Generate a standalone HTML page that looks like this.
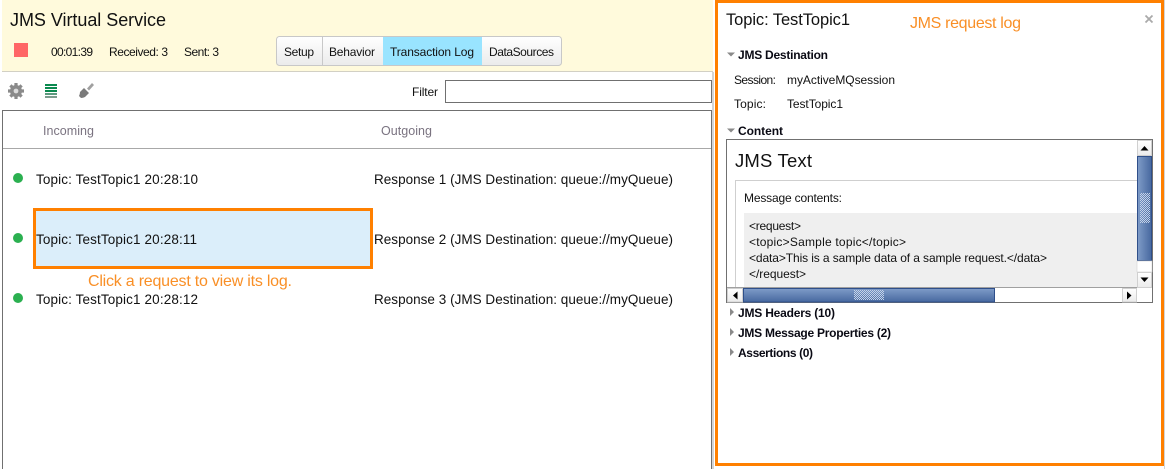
<!DOCTYPE html>
<html>
<head>
<meta charset="utf-8">
<style>
html,body{margin:0;padding:0;background:#fff;width:1165px;height:469px;overflow:hidden}
svg{display:block;position:absolute;left:0;top:0}
text{font-family:"Liberation Sans",sans-serif;font-size:12.5px;fill:#111}
.b{font-weight:bold;font-size:12px;fill:#0a0a14}
.o{fill:#f98f26;font-size:16px}
.h{fill:#7a7380;font-size:12.5px}
</style>
</head>
<body>
<svg width="1165" height="469" viewBox="0 0 1165 469" xmlns="http://www.w3.org/2000/svg">
<defs>
<linearGradient id="tab" x1="0" y1="0" x2="0" y2="1"><stop offset="0" stop-color="#ffffff"/><stop offset="1" stop-color="#ebebeb"/></linearGradient>
<linearGradient id="thV" x1="0" y1="0" x2="1" y2="0"><stop offset="0" stop-color="#7f9cc8"/><stop offset="1" stop-color="#47689f"/></linearGradient>
<linearGradient id="thH" x1="0" y1="0" x2="0" y2="1"><stop offset="0" stop-color="#7f9cc8"/><stop offset="1" stop-color="#47689f"/></linearGradient>
<pattern id="dots" width="2" height="2" patternUnits="userSpaceOnUse"><rect width="1" height="1" fill="#c4d2e8"/><rect x="1" y="1" width="1" height="1" fill="#c4d2e8"/></pattern>
</defs>

<!-- header -->
<rect x="2" y="0" width="711" height="71" fill="#fffadc"/>
<rect x="2" y="71" width="711" height="1" fill="#d2d0c4"/>
<text x="10" y="26" style="font-size:18px" textLength="156" fill="#000">JMS Virtual Service</text>
<rect x="14" y="43" width="14" height="14" fill="#ff6666"/>
<text x="51" y="56" style="font-size:12px" textLength="42">00:01:39</text>
<text x="109" y="56" style="font-size:12px" textLength="59">Received: 3</text>
<text x="184" y="56" style="font-size:12px" textLength="35">Sent: 3</text>

<!-- tabs -->
<rect x="276.5" y="36.5" width="285" height="29" rx="3" fill="url(#tab)" stroke="#c8c8c8"/>
<rect x="383" y="37" width="99" height="28" fill="#99e4ff"/>
<rect x="322" y="37" width="1" height="28" fill="#c8c8c8"/>
<text x="284" y="56" style="font-size:12px" textLength="30">Setup</text>
<text x="329" y="56" style="font-size:12px" textLength="46">Behavior</text>
<text x="390" y="56" style="font-size:12px" textLength="84">Transaction Log</text>
<text x="489" y="56" style="font-size:12px" textLength="65">DataSources</text>

<!-- toolbar icons -->
<circle cx="16" cy="91" r="6" fill="#8a8a8a"/>
<path d="M16 83v16M8 91h16M10.4 85.4l11.2 11.2M21.6 85.4l-11.2 11.2" stroke="#8a8a8a" stroke-width="3.2" fill="none"/>
<circle cx="16" cy="91" r="2.4" fill="#dcdcdc"/>
<rect x="45" y="84" width="12" height="2" fill="#0b8a4f"/>
<rect x="45" y="87" width="12" height="2" fill="#0b8a4f"/>
<rect x="45" y="90" width="12" height="2" fill="#0b8a4f"/>
<rect x="45" y="93" width="12" height="2" fill="#5c9a7e"/>
<rect x="45" y="96" width="12" height="2" fill="#7c9c8e"/>
<path d="M84 88L89 93L85 97Q83 98 81 98L79 96Q80 94 80 92z" fill="#7a7a7a"/>
<path d="M87 88.5L92 83L94 85L89 90.5z" fill="#a0a0a0"/>

<!-- filter -->
<text x="412" y="96" style="font-size:12px" textLength="26">Filter</text>
<rect x="445.5" y="80.5" width="266" height="22" fill="#fff" stroke="#707070"/>

<!-- table -->
<path d="M2.5 469V110.5H711.5V469" fill="none" stroke="#707070"/>
<rect x="3" y="148" width="708" height="1" fill="#a8a8a8"/>
<text x="43" y="135" class="h" textLength="51">Incoming</text>
<text x="381" y="135" class="h" textLength="51">Outgoing</text>
<rect x="712" y="72" width="2" height="397" fill="#d4d4d4"/>

<circle cx="18" cy="178" r="5" fill="#2bb050"/>
<text x="36" y="184" style="font-size:13.5px" textLength="162">Topic: TestTopic1 20:28:10</text>
<text x="374" y="184" style="font-size:13.5px" textLength="299">Response 1 (JMS Destination: queue://myQueue)</text>

<rect x="34.5" y="209.5" width="337" height="58" fill="#dbeefa" stroke="#ff8000" stroke-width="3"/>
<circle cx="18" cy="238" r="5" fill="#2bb050"/>
<text x="36" y="244" style="font-size:13.5px" textLength="161">Topic: TestTopic1 20:28:11</text>
<text x="374" y="244" style="font-size:13.5px" textLength="299">Response 2 (JMS Destination: queue://myQueue)</text>

<text x="88" y="286" class="o" textLength="204">Click a request to view its log.</text>

<circle cx="18" cy="298" r="5" fill="#2bb050"/>
<text x="36" y="304" style="font-size:13.5px" textLength="162">Topic: TestTopic1 20:28:12</text>
<text x="374" y="304" style="font-size:13.5px" textLength="299">Response 3 (JMS Destination: queue://myQueue)</text>

<!-- right panel -->
<rect x="716.5" y="1.5" width="446" height="463" fill="#fff" stroke="#ff8000" stroke-width="3"/>
<rect x="1164" y="0" width="1" height="469" fill="#d4d4d4"/>
<text x="726" y="25" style="font-size:16.5px" textLength="124">Topic: TestTopic1</text>
<text x="910" y="28" class="o" textLength="111">JMS request log</text>
<path d="M1145.5 15.5l7 7M1152.5 15.5l-7 7" stroke="#aaa" stroke-width="1.8" fill="none"/>

<path d="M727 52.5h8l-4 4z" fill="#8a8a8a"/>
<text x="738" y="59" class="b" textLength="90">JMS Destination</text>
<text x="734" y="84" style="font-size:12px" textLength="42">Session:</text>
<text x="787" y="84" style="font-size:12px" textLength="108">myActiveMQsession</text>
<text x="734" y="108" style="font-size:12px" textLength="32">Topic:</text>
<text x="787" y="108" style="font-size:12px" textLength="56">TestTopic1</text>
<path d="M727 128.5h8l-4 4z" fill="#8a8a8a"/>
<text x="738" y="135" class="b" textLength="45">Content</text>

<!-- content box -->
<rect x="726.5" y="139.5" width="426" height="163" fill="#fff" stroke="#707070"/>
<text x="735" y="167" style="font-size:18.5px" textLength="77" fill="#000">JMS Text</text>
<path d="M1137 180.5H735.5V288" fill="none" stroke="#cfcfcf"/>
<text x="744" y="202" style="font-size:12px" textLength="98">Message contents:</text>
<rect x="744" y="213" width="393" height="75" fill="#efefef"/>
<text x="749" y="230" style="font-size:12px" textLength="52">&lt;request&gt;</text>
<text x="749" y="246" style="font-size:12px" textLength="157">&lt;topic&gt;Sample topic&lt;/topic&gt;</text>
<text x="749" y="262" style="font-size:12px" textLength="298">&lt;data&gt;This is a sample data of a sample request.&lt;/data&gt;</text>
<text x="749" y="278" style="font-size:12px" textLength="57">&lt;/request&gt;</text>

<!-- vertical scrollbar -->
<rect x="1137" y="140" width="15" height="148" fill="#fff"/>
<rect x="1137.5" y="140.5" width="14" height="15" fill="url(#tab)" stroke="#d0d0d0"/>
<path d="M1140.5 150.5h8l-4-4.5z" fill="#000"/>
<rect x="1137.5" y="156.5" width="14" height="104" fill="url(#thV)" stroke="#2f4f8a"/>
<rect x="1140" y="193" width="10" height="30" fill="url(#dots)"/>
<rect x="1137" y="261" width="15" height="11" fill="#fff" stroke="#d0d0d0" stroke-width="0.6"/>
<rect x="1137.5" y="272.5" width="14" height="15" fill="url(#tab)" stroke="#d0d0d0"/>
<path d="M1140.5 277.5h8l-4 4.5z" fill="#000"/>

<!-- horizontal scrollbar -->
<rect x="727" y="288" width="425" height="14" fill="#fff"/>
<rect x="727" y="287" width="410" height="1" fill="#a0a0a0"/>
<rect x="727.5" y="288.5" width="15" height="13.5" fill="url(#tab)" stroke="#d0d0d0"/>
<path d="M737.5 291.5v8l-4.5-4z" fill="#000"/>
<rect x="743.5" y="288.5" width="251" height="13.5" fill="url(#thH)" stroke="#2f4f8a"/>
<rect x="854" y="290" width="30" height="10" fill="url(#dots)"/>
<rect x="1122.5" y="288.5" width="14" height="13.5" fill="url(#tab)" stroke="#d0d0d0"/>
<path d="M1127 291.5v8l4.5-4z" fill="#000"/>

<!-- collapsed sections -->
<path d="M730 308v8l4-4z" fill="#8a8a8a"/>
<text x="738" y="317" class="b" textLength="97">JMS Headers (10)</text>
<path d="M730 328v8l4-4z" fill="#8a8a8a"/>
<text x="738" y="337" class="b" textLength="153">JMS Message Properties (2)</text>
<path d="M730 348v8l4-4z" fill="#8a8a8a"/>
<text x="738" y="357" class="b" textLength="75">Assertions (0)</text>
</svg>
</body>
</html>
